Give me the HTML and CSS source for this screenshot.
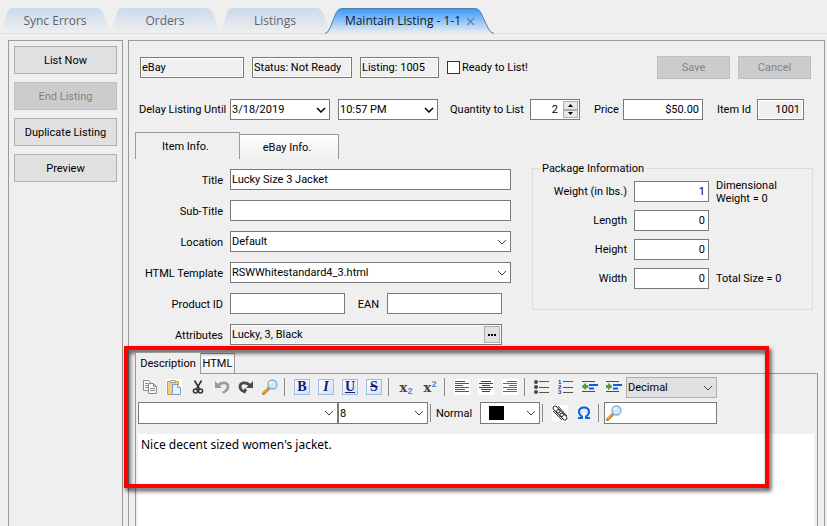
FILE: index.html
```html
<!DOCTYPE html>
<html lang="en">
<head>
  <meta charset="UTF-8" />
  <meta name="viewport" content="width=device-width, initial-scale=1.0"/>
  <title>Maintain Listing - 1-1</title>
  <link rel="stylesheet" href="styles.css">
</head>
<body>
  <!-- shared shapes -->
  <svg class="defs" width="0" height="0">
    <defs>
      <linearGradient id="tabGrad" x1="0" y1="0" x2="0" y2="1">
        <stop offset="0" stop-color="#cbdaeb"/>
        <stop offset="1" stop-color="#eeefef"/>
      </linearGradient>
      <linearGradient id="tabActiveGrad" x1="0" y1="0" x2="0" y2="1">
        <stop offset="0" stop-color="#3398fd"/>
        <stop offset="1" stop-color="#eff0f0"/>
      </linearGradient>
      <symbol id="chevron" viewBox="0 0 10 6">
        <path d="M1 1 L5 5 L9 1" fill="none" stroke="currentColor"/>
      </symbol>
      <symbol id="chevronDark" viewBox="0 0 10 6">
        <path d="M1 1 L5 5 L9 1" fill="none" stroke="currentColor" stroke-width="1.500"/>
      </symbol>
      <symbol id="magnifier" viewBox="0 0 16 16">
        <path d="M1.500 14.500 L7 9" stroke="#b86a14" stroke-width="3" stroke-linecap="round"/>
        <path d="M1.500 14 L6 9.500" stroke="#f7b23c" stroke-width="1.500" stroke-linecap="round"/>
        <circle cx="10.500" cy="5.500" r="4.500" fill="#c4ecfb" stroke="#8fa9d0" stroke-width="1.300"/>
        <path d="M8 5 Q8.500 3 10.500 2.800" fill="none" stroke="#fff" stroke-width="1.500"/>
      </symbol>
    </defs>
  </svg>

  <nav class="doc-tabs">
    <a href="#" class="doc-tab">
      <svg viewBox="0 0 110 25"><path d="M0 25 Q2 23 3 19 L7 5 Q8 0 13 0 H96 Q101 0 103 5 L108 19 Q109 23 110 25 Z" fill="url(#tabGrad)"/></svg>
      <span>Sync Errors</span>
    </a>
    <a href="#" class="doc-tab">
      <svg viewBox="0 0 110 25"><path d="M0 25 Q2 23 3 19 L7 5 Q8 0 13 0 H96 Q101 0 103 5 L108 19 Q109 23 110 25 Z" fill="url(#tabGrad)"/></svg>
      <span>Orders</span>
    </a>
    <a href="#" class="doc-tab">
      <svg viewBox="0 0 110 25"><path d="M0 25 Q2 23 3 19 L7 5 Q8 0 13 0 H96 Q101 0 103 5 L108 19 Q109 23 110 25 Z" fill="url(#tabGrad)"/></svg>
      <span>Listings</span>
    </a>
    <a href="#" class="doc-tab active">
      <svg viewBox="0 0 170 26"><path d="M0 25.500 Q3 25 5 20 L11 5 Q13 .5 17 .5 H150 Q154 .5 156 5 L163 20 Q165 25 169 25.500" fill="url(#tabActiveGrad)" stroke="#5c7c9e"/></svg>
      <span>Maintain Listing - 1-1</span>
      <svg class="close" viewBox="0 0 8 8"><path d="M1 1 L7 7 M7 1 L1 7" stroke="#5d7591"/></svg>
    </a>
  </nav>

  <main class="workspace">
    <aside class="sidebar">
      <button class="btn">List Now</button>
      <button class="btn" disabled>End Listing</button>
      <button class="btn">Duplicate Listing</button>
      <button class="btn">Preview</button>
    </aside>

    <section class="listing">
      <div class="row status-row">
        <input class="field readonly w-site" value="eBay" aria-label="Site" readonly>
        <input class="field readonly w-status" value="Status: Not Ready" aria-label="Status" readonly>
        <input class="field readonly w-listing" value="Listing: 1005" aria-label="Listing" readonly>
        <label class="check"><input type="checkbox"> Ready to List!</label>
        <div class="actions">
          <button class="btn small" disabled>Save</button>
          <button class="btn small" disabled>Cancel</button>
        </div>
      </div>

      <div class="row delay-row">
        <label for="delayDate" class="w-delay">Delay Listing Until</label>
        <span class="combo dark w-date">
          <select id="delayDate"><option>3/18/2019</option></select>
          <svg><use href="#chevronDark"/></svg>
        </span>
        <span class="combo dark w-date time">
          <select aria-label="Delay time"><option>10:57 PM</option></select>
          <svg><use href="#chevronDark"/></svg>
        </span>
        <label for="qty" class="w-qty">Quantity to List</label>
        <span class="spinner">
          <input id="qty" value="2">
          <span class="spin-btns">
            <button aria-label="More"><svg viewBox="0 0 5 3"><path d="M0 3 L2.500 0 L5 3 Z"/></svg></button>
            <button aria-label="Less"><svg viewBox="0 0 5 3"><path d="M0 0 L2.500 3 L5 0 Z"/></svg></button>
          </span>
        </span>
        <label for="price" class="w-price-label">Price</label>
        <input id="price" class="field num w-price" value="$50.00">
        <label for="itemId" class="w-id-label">Item Id</label>
        <input id="itemId" class="field readonly num w-id" value="1001" readonly>
      </div>

      <div class="info-tabs">
        <button class="info-tab active">Item Info.</button>
        <button class="info-tab">eBay Info.</button>
      </div>

      <div class="info">
        <div class="form">
          <label for="title">Title</label>
          <input id="title" class="field" value="Lucky Size 3 Jacket">
          <label for="subtitle">Sub-Title</label>
          <input id="subtitle" class="field">
          <label for="location">Location</label>
          <span class="combo">
            <select id="location"><option>Default</option></select>
            <svg><use href="#chevron"/></svg>
          </span>
          <label for="template">HTML Template</label>
          <span class="combo">
            <select id="template"><option>RSWWhitestandard4_3.html</option></select>
            <svg><use href="#chevron"/></svg>
          </span>
          <label for="productId">Product ID</label>
          <div class="pair">
            <input id="productId" class="field">
            <label for="ean">EAN</label>
            <input id="ean" class="field">
          </div>
          <label for="attributes">Attributes</label>
          <div class="browse">
            <input id="attributes" value="Lucky, 3, Black" readonly>
            <button aria-label="Edit attributes"><i></i><i></i><i></i></button>
          </div>
        </div>

        <fieldset class="package">
          <legend>Package Information</legend>
          <label for="weight">Weight (in lbs.)</label>
          <input id="weight" class="field num" value="1">
          <span class="note">Dimensional<br>Weight = 0</span>
          <label for="length">Length</label>
          <input id="length" class="field num" value="0">
          <span></span>
          <label for="height">Height</label>
          <input id="height" class="field num" value="0">
          <span></span>
          <label for="width">Width</label>
          <input id="width" class="field num" value="0">
          <span class="note">Total Size = 0</span>
        </fieldset>
      </div>

      <div class="description">
        <div class="editor-tabs">
          <button class="editor-tab active">Description</button>
          <button class="editor-tab">HTML</button>
        </div>
        <div class="editor">
          <div class="toolbar">
            <button class="tool" aria-label="Copy">
              <svg viewBox="0 0 16 16"><g fill="#f8f8f8" stroke="#8b8b8b"><path d="M1.500 1.500 H6.500 L9.500 4.500 V11.500 H1.500 Z"/><path d="M6.500 4.500 H11.500 L14.500 7.500 V14.500 H6.500 Z"/></g><path d="M3 4.500 H6 M3 6.500 H6 M3 8.500 H6 M8 9.500 H13 M8 11.500 H13 M11.500 4.500 V7.500 H14.500" stroke="#8b8b8b" fill="none"/></svg>
            </button>
            <button class="tool" aria-label="Paste">
              <svg viewBox="0 0 16 16"><rect width="16" height="16" fill="#fff"/><path d="M1.500 2.500 H12.500 V15.500 H1.500 Z" fill="#f3cf77" stroke="#c99a38"/><path d="M4.500 3.500 V1.500 H9.500 V3.500 Z" fill="#f7f2dc" stroke="#a8a087"/><path d="M6.500 5.500 H11.500 L14.500 8.500 V15.500 H6.500 Z" fill="#e6f0ff" stroke="#7d9ad0"/><path d="M11.500 5.500 V8.500 H14.500" fill="#fff" stroke="#7d9ad0"/></svg>
            </button>
            <button class="tool" aria-label="Cut">
              <svg viewBox="0 0 16 16"><g fill="none" stroke="#333"><path d="M4.500 1.500 L9.500 10 M11.500 1.500 L6.500 10" stroke-width="1.600"/><circle cx="5.500" cy="12" r="2" stroke-width="1.600"/><circle cx="10.500" cy="12" r="2" stroke-width="1.600"/></g></svg>
            </button>
            <button class="tool" aria-label="Undo">
              <svg viewBox="0 0 16 16"><path d="M1 2 L1 9 H8 L5.800 6.800 Q8 4.800 10.500 5.200 Q13 5.800 12.400 8.500 Q11.800 11 8 13 L9.500 14.800 Q15 12 15.400 8 Q15.600 3 10.500 2.500 Q6.500 2.200 3.700 4.700 Z" fill="#9b9b9b"/></svg>
            </button>
            <button class="tool" aria-label="Redo">
              <svg viewBox="0 0 16 16"><path d="M15 2 L15 9 H8 L10.200 6.800 Q8 4.800 5.500 5.200 Q3 5.800 3.600 8.500 Q4 10 5.500 11 L7 9 L9 11 L7 14.500 Q1 12.500 .6 8 Q.4 3 5.500 2.500 Q9.500 2.200 12.300 4.700 Z" fill="#4a4a4a"/></svg>
            </button>
            <button class="tool" aria-label="Find"><svg><use href="#magnifier"/></svg></button>
            <span class="sep"></span>
            <button class="tool"><b class="face">B</b></button>
            <button class="tool"><i class="face">I</i></button>
            <button class="tool"><u class="face">U</u></button>
            <button class="tool"><s class="face">S</s></button>
            <span class="sep"></span>
            <button class="tool script">x<sub>2</sub></button>
            <button class="tool script">x<sup>2</sup></button>
            <span class="sep"></span>
            <button class="tool" aria-label="Align left">
              <svg viewBox="0 0 16 16"><rect width="16" height="16" fill="#fff"/><path d="M1 2.500 H11 M1 4.500 H15 M1 6.500 H9 M1 8.500 H15 M1 10.500 H11 M1 12.500 H15" stroke="#555"/></svg>
            </button>
            <button class="tool" aria-label="Align center">
              <svg viewBox="0 0 16 16"><rect width="16" height="16" fill="#fff"/><path d="M3 2.500 H13 M1 4.500 H15 M4 6.500 H12 M1 8.500 H15 M3 10.500 H13 M4 12.500 H12" stroke="#444"/></svg>
            </button>
            <button class="tool" aria-label="Align right">
              <svg viewBox="0 0 16 16"><rect width="16" height="16" fill="#fff"/><path d="M5 2.500 H15 M1 4.500 H15 M7 6.500 H15 M1 8.500 H15 M5 10.500 H15 M1 12.500 H15" stroke="#666"/></svg>
            </button>
            <span class="sep"></span>
            <button class="tool" aria-label="Bullets">
              <svg viewBox="0 0 16 16"><path d="M5 2.500 H15 M5 8.500 H15 M5 13.500 H15" stroke="#555"/><g fill="#45455f"><circle cx="2" cy="3" r="2"/><circle cx="2" cy="8" r="2"/><circle cx="2" cy="13" r="2"/></g></svg>
            </button>
            <button class="tool" aria-label="Numbering">
              <svg viewBox="0 0 16 16"><path d="M5 2.500 H15 M5 8.500 H15 M5 13.500 H15" stroke="#555"/><g class="digits"><text x="0" y="5">1</text><text x="0" y="10">2</text><text x="0" y="15">3</text></g></svg>
            </button>
            <button class="tool" aria-label="Outdent">
              <svg viewBox="0 0 16 16"><path d="M0 2.500 H13 M0 12.500 H13" stroke="#1d4fc4"/><path d="M7 6 H16 M7 9.500 H12" stroke="#0a5fe8" stroke-width="2"/><path d="M0 7.500 L3.500 4.500 V6.500 H6 V8.500 H3.500 V10.500 Z" fill="#4fa53f" stroke="#2f7a2a" stroke-width=".6"/></svg>
            </button>
            <button class="tool" aria-label="Indent">
              <svg viewBox="0 0 16 16"><path d="M0 2.500 H13 M0 12.500 H13" stroke="#1d4fc4"/><path d="M7 6 H16 M7 9.500 H12" stroke="#0a5fe8" stroke-width="2"/><path d="M6 7.500 L2.500 4.500 V6.500 H0 V8.500 H2.500 V10.500 Z" fill="#4fa53f" stroke="#2f7a2a" stroke-width=".6"/></svg>
            </button>
            <span class="combo gray w-numfmt">
              <select aria-label="Number format"><option>Decimal</option></select>
              <svg><use href="#chevron"/></svg>
            </span>
          </div>
          <div class="toolbar tall">
            <span class="combo w-font">
              <select aria-label="Font"><option></option></select>
              <svg><use href="#chevron"/></svg>
            </span>
            <span class="combo w-size">
              <select aria-label="Font size"><option>8</option></select>
              <svg><use href="#chevron"/></svg>
            </span>
            <span class="sep"></span>
            <label for="color" class="w-normal">Normal</label>
            <span class="combo color">
              <select id="color"><option></option></select>
              <i class="swatch"></i>
              <svg><use href="#chevron"/></svg>
            </span>
            <span class="sep"></span>
            <button class="tool" aria-label="Link">
              <svg viewBox="0 0 16 16"><rect width="16" height="16" fill="#fff"/><g fill="none" stroke="#333"><rect x="-4" y="-2" width="8" height="4" rx="2" transform="translate(4.500 4.500) rotate(45)"/><rect x="-4" y="-2" width="8" height="4" rx="2" transform="translate(8 8) rotate(45)"/><rect x="-4" y="-2" width="8" height="4" rx="2" transform="translate(11.500 11.500) rotate(45)"/><path d="M6 1 L15 11 M1 6 L10 15"/></g></svg>
            </button>
            <button class="tool" aria-label="Symbol">
              <svg viewBox="0 0 16 16"><path d="M2 13 H6 V11.500 Q3 9.500 3 7 Q3 2.500 8 2.500 Q13 2.500 13 7 Q13 9.500 10 11.500 V13 H14" fill="none" stroke="#0a66e0" stroke-width="2"/></svg>
            </button>
            <span class="sep"></span>
            <label class="search">
              <svg><use href="#magnifier"/></svg>
              <input aria-label="Search">
            </label>
          </div>
          <textarea aria-label="Description">Nice decent sized women's jacket.</textarea>
        </div>
        <div class="highlight"></div>
      </div>
    </section>
  </main>
</body>
</html>
```
FILE: styles.css
```css
* {
  box-sizing: border-box;
}

body {
  margin: 0;
  height: 100vh;
  overflow: hidden;
  display: flex;
  flex-direction: column;
  background-color: #efefef;
  color: #000;
  font-family: Roboto, "Noto Sans", sans-serif;
  font-size: 11px;
}

button, input, select, textarea {
  font: inherit;
  color: inherit;
  margin: 0;
}

.defs {
  position: absolute;
}

/* document tabs */
.doc-tabs {
  display: flex;
  padding-top: 8px;
  border-bottom: 1px solid #dcdfe3;
}

.doc-tab {
  position: relative;
  width: 110px;
  height: 25px;
  flex: none;
  text-align: center;
  line-height: 26px;
  font-family: "Open Sans", sans-serif;
  font-size: 12px;
  color: #62626c;
  text-decoration: none;
}

.doc-tab svg {
  position: absolute;
  left: 0;
  top: 0;
  width: 100%;
}

.doc-tab span {
  position: relative;
}

.doc-tab.active {
  width: 170px;
  margin-left: -5px;
  padding-right: 14px;
  color: #0c1c2c;
}

.doc-tab .close {
  left: auto;
  right: 20px;
  top: 9px;
  width: 9px;
}

/* panels */
.workspace {
  flex: 1;
  display: flex;
  gap: 5px;
  padding: 6px 2px 0 8px;
  min-height: 0;
}

.sidebar, .listing {
  border: 1px solid #9a9a9a;
  border-bottom: none;
}

.sidebar {
  width: 115px;
  flex: none;
  padding: 5px;
  display: flex;
  flex-direction: column;
  gap: 8px;
}

.listing {
  flex: 1;
  min-width: 0;
  padding: 15px 6px 0;
  display: flex;
  flex-direction: column;
}

.btn {
  height: 28px;
  padding: 0;
  background-color: #e1e1e1;
  border: 1px solid #adadad;
}

.btn.small {
  width: 73px;
  height: 23px;
}

.btn:disabled {
  background-color: #ccc;
  border-color: #bfbfbf;
  color: #838383;
}

/* fields */
.field, .combo, .spinner, .browse, .search {
  height: 21px;
  background-color: #fff;
  border: 1px solid #7a7a7a;
}

.field {
  min-width: 0;
  padding: 0 1px;
}

.field.readonly {
  background-color: #efefef;
  box-shadow: inset 0 0 0 1px #fff;
}

.field.num {
  text-align: right;
  padding-right: 3px;
}

.combo {
  position: relative;
  display: block;
}

.combo select {
  appearance: none;
  display: block;
  width: 100%;
  height: 100%;
  padding: 0 1px;
  border: none;
  background: none;
}

.combo svg {
  position: absolute;
  right: 3px;
  top: 7px;
  width: 10px;
  height: 6px;
  color: #444;
  pointer-events: none;
}

.combo.dark svg {
  color: #000;
}

.combo.gray {
  background-color: #e1e1e1;
  border-color: #adadad;
}

.row {
  display: flex;
  align-items: center;
}

.status-row {
  gap: 8px;
  height: 23px;
  padding: 0 7px 0 5px;
}

.w-site { width: 104px; }
.w-status { width: 100px; }
.w-listing { width: 79px; }

.check {
  display: flex;
  align-items: center;
  gap: 2px;
}

.check input {
  appearance: none;
  width: 13px;
  height: 13px;
  background-color: #fff;
  border: 1px solid #333;
}

.actions {
  display: flex;
  gap: 8px;
  margin-left: auto;
}

.delay-row {
  margin-top: 20px;
  padding-left: 4px;
}

.w-delay { width: 91px; }
.w-date { width: 100px; }
.time { margin-left: 8px; }
.w-qty { width: 80px; margin-left: 12px; }
.w-price-label { width: 29px; margin-left: 14px; }
.w-price { width: 80px; }
.w-id-label { width: 40px; margin-left: 14px; }
.w-id { width: 47px; }

.spinner {
  display: flex;
  width: 50px;
  padding: 1px;
}

.spinner input {
  flex: 1;
  min-width: 0;
  padding: 0 5px 0 0;
  border: none;
  text-align: right;
}

.spin-btns {
  display: flex;
  flex-direction: column;
}

.spin-btns button {
  display: flex;
  align-items: center;
  justify-content: center;
  flex: 1;
  width: 15px;
  padding: 0;
  border: 1px solid #adadad;
  background-color: #e8e8e8;
}

.spin-btns svg {
  width: 5px;
  height: 3px;
}

/* Item / eBay tabs */
.info-tabs {
  display: flex;
  align-items: flex-end;
  margin-top: 12px;
}

.info-tab {
  width: 99px;
  height: 25px;
  padding: 0 4px 0 0;
  border: 1px solid #9a9a9a;
  border-width: 1px 1px 0 0;
  background: linear-gradient(#fff, #efefef);
}

.info-tab.active {
  width: 105px;
  height: 27px;
  border-left-width: 1px;
  background: none;
}

.info {
  display: flex;
  align-items: flex-start;
  justify-content: space-between;
  padding: 9px 5px 0 0;
}

.form {
  display: grid;
  grid-template-columns: 88px 281px;
  column-gap: 7px;
  row-gap: 10px;
  align-items: center;
  padding-top: 1px;
}

.form > label, .package label {
  text-align: right;
}

.form label {
  padding-top: 1px;
}

.pair {
  display: grid;
  grid-template-columns: 115px 42px 115px;
  align-items: center;
}

.pair label {
  padding-right: 8px;
  text-align: right;
}

.browse {
  display: flex;
  width: 272px;
  padding: 1px;
}

.browse input {
  flex: 1;
  min-width: 0;
  padding: 0;
  border: none;
  background-color: #efefef;
}

.browse button {
  display: flex;
  align-items: center;
  justify-content: center;
  gap: 1px;
  width: 16px;
  padding: 0;
  border: 1px solid #adadad;
  background-color: #e1e1e1;
}

.browse i {
  width: 2px;
  height: 2px;
  background-color: #000;
}

.package {
  display: grid;
  grid-template-columns: 87px 75px 90px;
  column-gap: 7px;
  row-gap: 8px;
  align-items: center;
  align-content: start;
  width: 280px;
  height: 148px;
  margin: -6px 0 0;
  padding: 6px 6px 0 7px;
  border: 1px solid #dcdcdc;
}

.package legend {
  padding: 0 2px;
}

.note {
  height: 21px;
  display: flex;
  align-items: center;
  line-height: 13px;
}

/* description editor */
.description {
  position: relative;
  flex: 1;
  display: flex;
  flex-direction: column;
  margin-top: 7px;
}

.editor-tabs {
  display: flex;
  align-items: flex-end;
}

.editor-tab {
  position: relative;
  width: 34px;
  height: 20px;
  padding: 0;
  border: 1px solid #9a9a9a;
  border-width: 1px 1px 0 0;
  background: linear-gradient(#fff, #efefef);
}

.editor-tab.active {
  width: 66px;
  height: 22px;
  margin-bottom: -1px;
  border-left-width: 1px;
  background: #efefef;
  z-index: 1;
}

.editor {
  flex: 1;
  display: flex;
  flex-direction: column;
  padding: 2px 3px 0 2px;
  border: 1px solid #9a9a9a;
  border-bottom: none;
}

.toolbar {
  display: flex;
  align-items: center;
  height: 22px;
}

.toolbar.tall {
  margin: 4px 0 10px;
}

.tool {
  display: flex;
  align-items: center;
  justify-content: center;
  width: 24px;
  height: 22px;
  padding: 0;
  border: none;
  background: none;
}

.tool svg {
  width: 16px;
  height: 16px;
}

.face {
  width: 16px;
  height: 16px;
  border: 1px solid #9dbce0;
  background: linear-gradient(135deg, #fff, #cfe4fb);
  color: #17177c;
  font-family: "Liberation Serif", serif;
  font-size: 14px;
  font-weight: bold;
  line-height: 14px;
}

.script {
  color: #444;
  font-family: "DejaVu Serif", serif;
  font-size: 13px;
  font-weight: bold;
}

.script sub, .script sup {
  color: #4a8bd8;
  font-family: "Liberation Sans", sans-serif;
  font-size: 9px;
  line-height: 10px;
}

.script sub {
  padding-top: 8px;
}

.script sup {
  padding-bottom: 6px;
}

.digits {
  font-family: "Liberation Sans", sans-serif;
  font-size: 6px;
  font-weight: bold;
  fill: #2a2aa0;
}

.sep {
  width: 8px;
  height: 18px;
  flex: none;
  background: linear-gradient(#8a8a8a, #8a8a8a) 2px 0 / 1px 100% no-repeat;
}

.w-numfmt { width: 91px; }
.w-font { width: 200px; }
.w-size { width: 90px; }
.w-normal { width: 44px; }

.tall .combo, .search {
  height: 22px;
}

.color {
  width: 60px;
}

.swatch {
  position: absolute;
  left: 8px;
  top: 3px;
  width: 15px;
  height: 14px;
  background-color: #000;
  pointer-events: none;
}

.search {
  display: flex;
  align-items: center;
  width: 113px;
}

.search svg {
  width: 18px;
  height: 16px;
  flex: none;
}

.search input {
  flex: 1;
  min-width: 0;
  border: none;
  background: none;
}

textarea {
  flex: 1;
  display: block;
  width: 100%;
  padding: 2px 3px;
  border: none;
  resize: none;
  background-color: #fff;
  font-family: "Noto Sans", sans-serif;
  font-size: 12px;
}

/* callout frame over the editor */
.highlight {
  position: absolute;
  left: -11px;
  right: 49px;
  top: -6px;
  height: 142px;
  border: 4px solid #f00;
  filter: drop-shadow(2px 3px 2px rgba(0, 0, 0, 0.75));
  pointer-events: none;
}
```
